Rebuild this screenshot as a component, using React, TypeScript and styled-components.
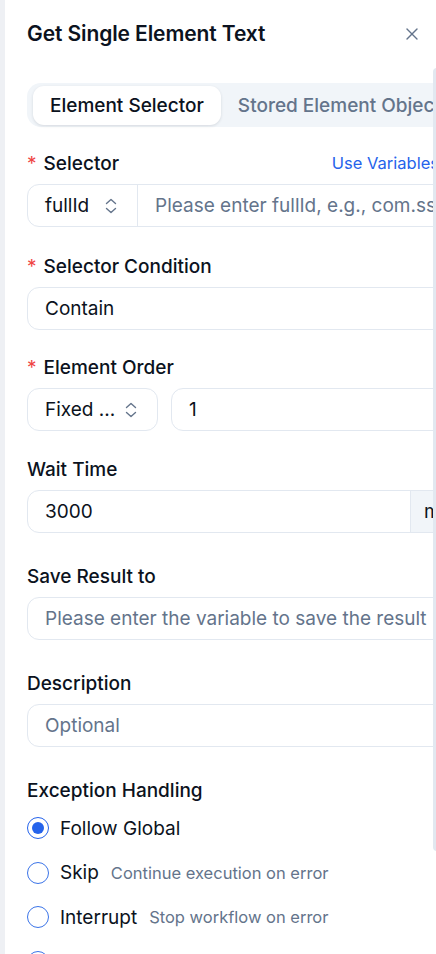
import React from "react";
import styled, { createGlobalStyle } from "styled-components";
import { X } from "lucide-react";

const GlobalStyle = createGlobalStyle`
  html, body {
    margin: 0;
    padding: 0;
    background: #eef0f4;
    overflow: hidden;
  }
  body {
    font-family: Inter, "Noto Sans", sans-serif;
    color: #0f172a;
  }
`;

const Panel = styled.div`
  position: relative;
  margin-left: 5px;
  width: 431px;
  height: 954px;
  background: #ffffff;
  overflow: hidden;
`;

const Header = styled.header`
  height: 68px;
  display: flex;
  align-items: center;
  justify-content: space-between;
  padding: 0 14px 0 22px;
  box-sizing: border-box;
`;

const Title = styled.h2`
  margin: 0;
  font-size: 21px;
  font-weight: 600;
  letter-spacing: -0.1px;
  color: #0b1220;
  padding-bottom: 2px;
`;

const CloseButton = styled.button`
  border: none;
  background: none;
  padding: 0;
  display: flex;
  color: #64748b;
  cursor: pointer;
`;

const Body = styled.main`
  padding: 15px 0 0 22px;
  width: 440px;
`;

const ScrollThumb = styled.div`
  position: absolute;
  left: 428px;
  top: 68px;
  width: 8px;
  height: 783px;
  border-radius: 4px;
  background: #e2e8f0;
`;

const TabBar = styled.div`
  display: flex;
  align-items: center;
  height: 44px;
  box-sizing: border-box;
  padding: 0 6px;
  background: #f1f5f9;
  border-radius: 14px;
  margin-bottom: 24px;
`;

const Tab = styled.div<{ $active?: boolean }>`
  height: 39px;
  display: flex;
  align-items: center;
  padding: 0 17px;
  border-radius: 11px;
  font-size: 19px;
  font-weight: 500;
  white-space: nowrap;
  color: ${(p) => (p.$active ? "#0b1220" : "#64748b")};
  background: ${(p) => (p.$active ? "#ffffff" : "transparent")};
  box-shadow: ${(p) => (p.$active ? "0 1px 3px rgba(15, 23, 42, 0.12)" : "none")};
`;

const Field = styled.div<{ $space?: number }>`
  margin-bottom: ${(p) => p.$space ?? 27}px;
`;

const LabelRow = styled.div`
  display: flex;
  align-items: center;
  justify-content: space-between;
  height: 24px;
  margin-bottom: 9px;
`;

const Label = styled.label`
  font-size: 19px;
  font-weight: 500;
  color: #0b1220;
  white-space: nowrap;
`;

const Required = styled.span`
  color: #ef4444;
  margin-right: 7px;
  font-weight: 400;
`;

const LinkText = styled.span`
  font-size: 16.5px;
  color: #2563eb;
  white-space: nowrap;
  margin-right: 28px;
`;

const InputBox = styled.div`
  display: flex;
  align-items: stretch;
  height: 43px;
  box-sizing: border-box;
  border: 1px solid #e2e8f0;
  border-radius: 12px;
  background: #ffffff;
  overflow: hidden;
`;

const InputText = styled.span<{ $placeholder?: boolean }>`
  flex: 1;
  display: flex;
  align-items: center;
  padding: 0 17px;
  font-size: 19px;
  white-space: nowrap;
  overflow: hidden;
  color: ${(p) => (p.$placeholder ? "#64748b" : "#0b1220")};
`;

const SelectPart = styled.div<{ $width: number }>`
  width: ${(p) => p.$width}px;
  flex-shrink: 0;
  display: flex;
  align-items: center;
  justify-content: space-between;
  padding: 0 20px 0 17px;
  box-sizing: border-box;
  font-size: 19px;
  color: #0b1220;
  border-right: 1px solid #e2e8f0;
  white-space: nowrap;
`;

const Addon = styled.div`
  width: 56px;
  flex-shrink: 0;
  display: flex;
  align-items: center;
  padding-left: 13px;
  box-sizing: border-box;
  background: #f1f5f9;
  border-left: 1px solid #e2e8f0;
  font-size: 19px;
  color: #0b1220;
`;

const SplitRow = styled.div`
  display: flex;
  gap: 13px;
`;

const SelectBox = styled(InputBox)<{ $width: number }>`
  width: ${(p) => p.$width}px;
  flex-shrink: 0;
  align-items: center;
  justify-content: space-between;
  padding: 0 20px 0 17px;
  font-size: 19px;
  color: #0b1220;
  white-space: nowrap;
`;

const Grow = styled(InputBox)`
  flex: 1;
`;

const RadioList = styled.div`
  display: flex;
  flex-direction: column;
  margin-top: -5px;
`;

const RadioRow = styled.div`
  display: flex;
  align-items: center;
  height: 44.5px;
`;

const RadioCircle = styled.span<{ $checked?: boolean }>`
  width: 22px;
  height: 22px;
  box-sizing: border-box;
  border-radius: 50%;
  border: 1.5px solid ${(p) => (p.$checked ? "#2563eb" : "#3b74e8")};
  display: flex;
  align-items: center;
  justify-content: center;
  margin-right: 11px;
  flex-shrink: 0;
  &::after {
    content: "";
    width: 12px;
    height: 12px;
    border-radius: 50%;
    background: ${(p) => (p.$checked ? "#2563eb" : "transparent")};
  }
`;

const RadioLabel = styled.span`
  font-size: 19px;
  color: #0b1220;
  margin-right: 12px;
  white-space: nowrap;
`;

const RadioHint = styled.span`
  font-size: 16.5px;
  color: #64748b;
  white-space: nowrap;
`;

const UpDown = () => (
  <svg width="12" height="16" viewBox="0 0 12 16" fill="none" stroke="#64748b" strokeWidth="1.4" strokeLinecap="round" strokeLinejoin="round">
    <path d="M1.5 5.5 L6 1.5 L10.5 5.5" />
    <path d="M1.5 10.5 L6 14.5 L10.5 10.5" />
  </svg>
);

const options = [
  { label: "Follow Global", hint: "", checked: true },
  { label: "Skip", hint: "Continue execution on error" },
  { label: "Interrupt", hint: "Stop workflow on error" },
  { label: "Retry", hint: "Retry the step on error" },
];

const App = () => {
  return (
    <>
      <GlobalStyle />
      <Panel>
        <Header>
          <Title>Get Single Element Text</Title>
          <CloseButton>
            <X size={20} strokeWidth={1.6} />
          </CloseButton>
        </Header>
        <ScrollThumb />
        <Body>
          <TabBar>
            <Tab $active>Element Selector</Tab>
            <Tab>Stored Element Object</Tab>
          </TabBar>

          <Field>
            <LabelRow>
              <Label><Required>*</Required>Selector</Label>
              <LinkText>Use Variables</LinkText>
            </LabelRow>
            <InputBox>
              <SelectPart $width={110}>
                fullId
                <UpDown />
              </SelectPart>
              <InputText $placeholder>Please enter fullId, e.g., com.ss.android:id/title</InputText>
            </InputBox>
          </Field>

          <Field $space={25}>
            <LabelRow>
              <Label><Required>*</Required>Selector Condition</Label>
            </LabelRow>
            <InputBox>
              <InputText>Contain</InputText>
            </InputBox>
          </Field>

          <Field $space={26}>
            <LabelRow>
              <Label><Required>*</Required>Element Order</Label>
            </LabelRow>
            <SplitRow>
              <SelectBox $width={131}>
                Fixed ...
                <UpDown />
              </SelectBox>
              <Grow>
                <InputText>1</InputText>
              </Grow>
            </SplitRow>
          </Field>

          <Field $space={31}>
            <LabelRow>
              <Label>Wait Time</Label>
            </LabelRow>
            <InputBox>
              <InputText>3000</InputText>
              <Addon>ms</Addon>
            </InputBox>
          </Field>

          <Field $space={31}>
            <LabelRow>
              <Label>Save Result to</Label>
            </LabelRow>
            <InputBox>
              <InputText $placeholder>Please enter the variable to save the result</InputText>
            </InputBox>
          </Field>

          <Field $space={31}>
            <LabelRow>
              <Label>Description</Label>
            </LabelRow>
            <InputBox>
              <InputText $placeholder>Optional</InputText>
            </InputBox>
          </Field>

          <div>
            <LabelRow>
              <Label>Exception Handling</Label>
            </LabelRow>
            <RadioList>
              {options.map((o) => (
                <RadioRow key={o.label}>
                  <RadioCircle $checked={o.checked} />
                  <RadioLabel>{o.label}</RadioLabel>
                  {o.hint && <RadioHint>{o.hint}</RadioHint>}
                </RadioRow>
              ))}
            </RadioList>
          </div>
        </Body>
      </Panel>
    </>
  );
};

export default App;
